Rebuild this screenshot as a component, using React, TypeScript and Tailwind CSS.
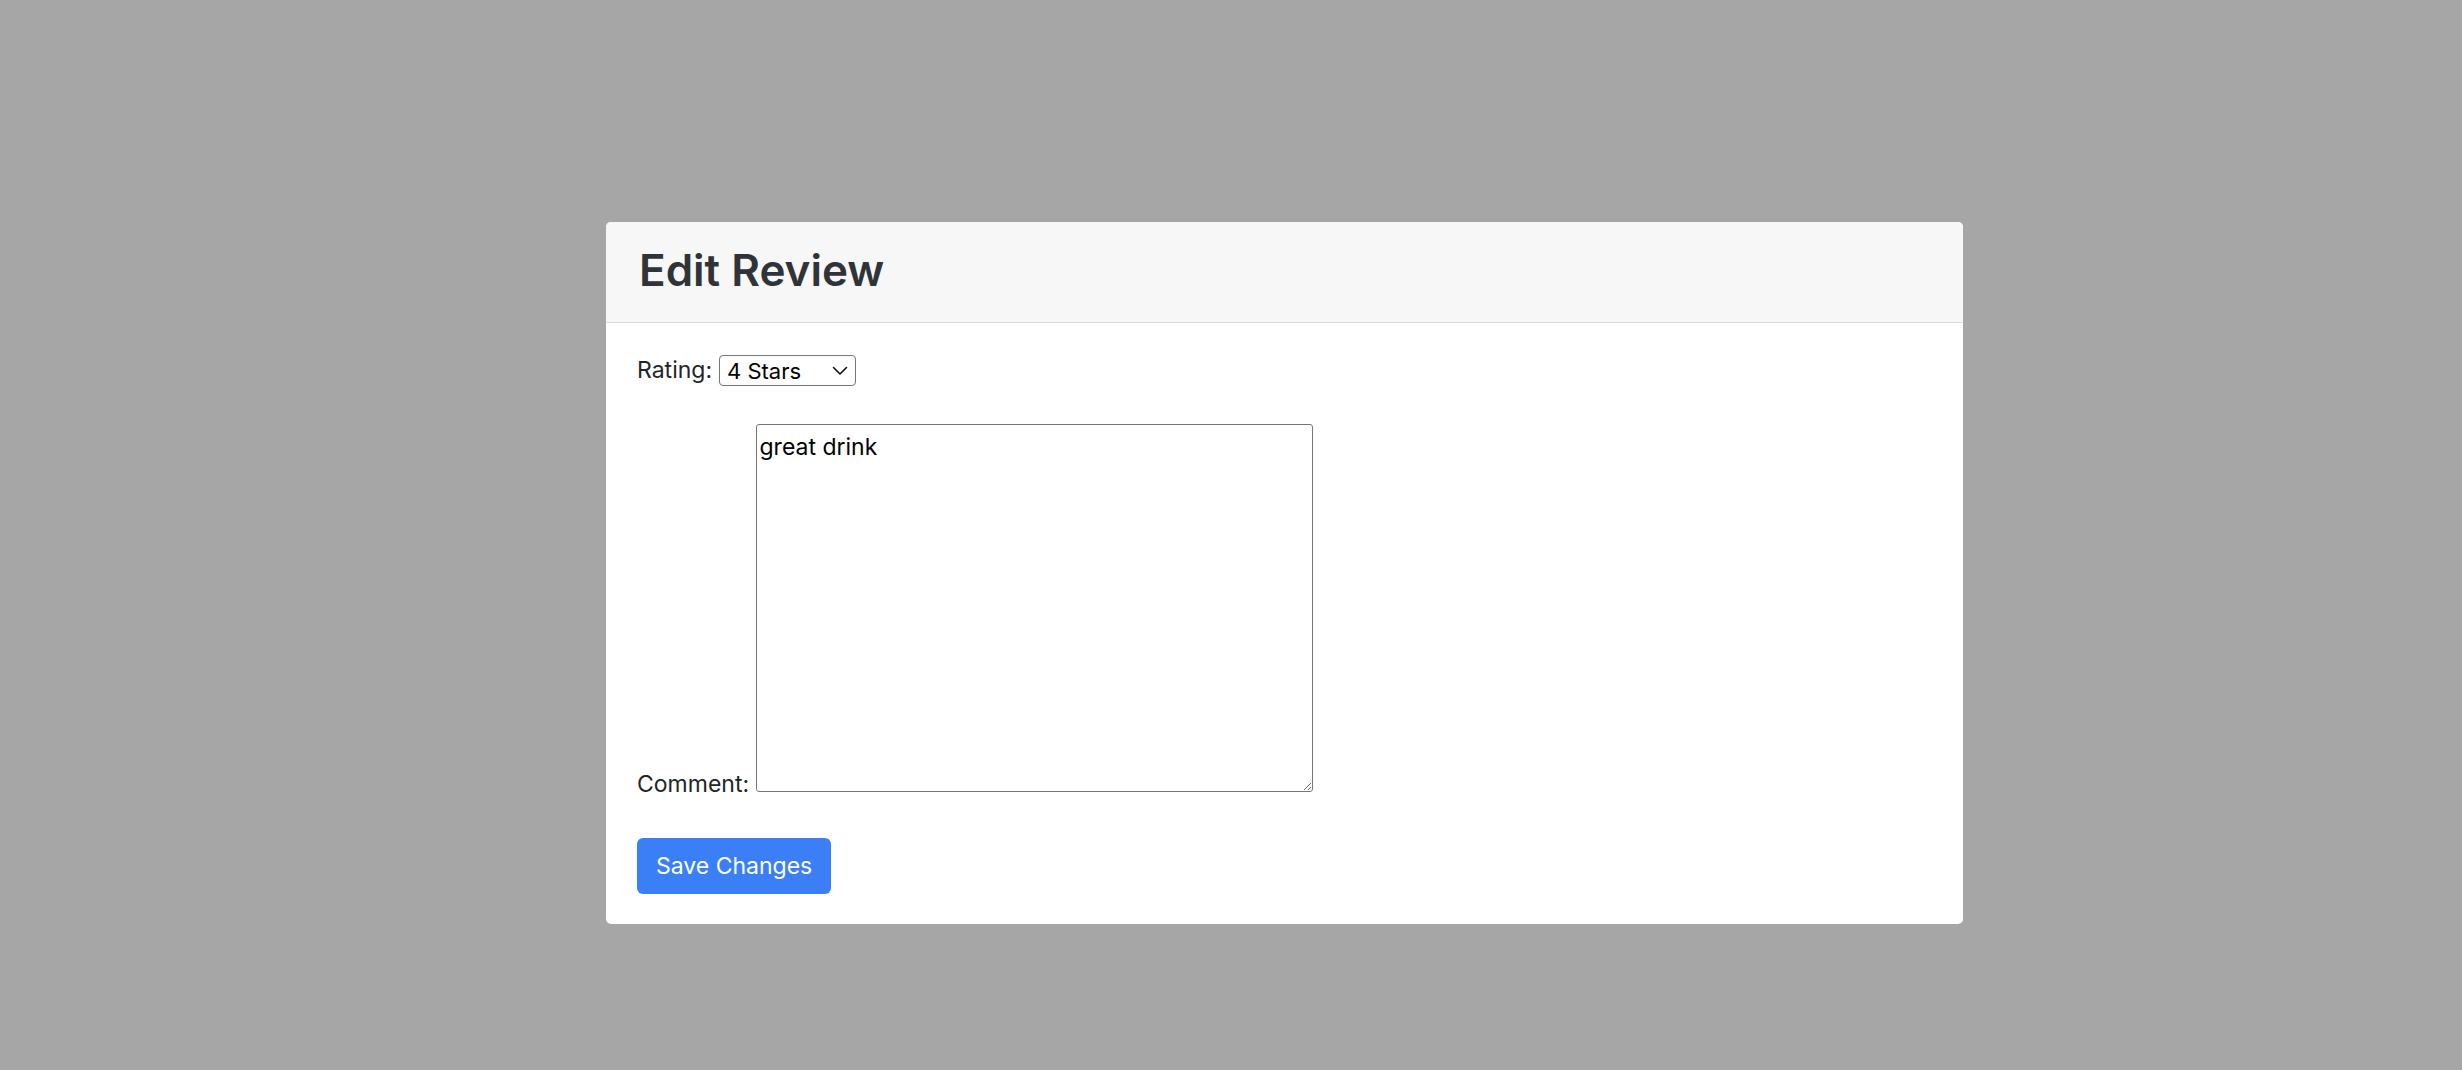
import { useState } from 'react';

export default function App() {
  const [rating, setRating] = useState('4');
  const [comment, setComment] = useState('great drink');

  return (
    <div className="min-h-screen bg-[#a6a6a6] pt-[222px] pl-[606px] font-['Inter',sans-serif] text-[#212529]">
      <div className="w-[1357px] bg-white rounded-[5px] overflow-hidden">
        {/* header */}
        <div className="h-[101px] bg-[#f7f7f7] border-b border-[#dcdcdc] px-[33px] flex items-center">
          <h2 className="text-[44px] leading-none font-semibold text-[#303438] mb-[5px]">Edit Review</h2>
        </div>

        {/* body */}
        <form className="pt-[32px] px-[31px] pb-[30px]" onSubmit={(e) => e.preventDefault()}>
          <div className="flex items-center gap-[7px] h-[31px]">
            <label htmlFor="rating" className="text-[23px]">Rating:</label>
            <div className="relative">
              <select
                id="rating"
                value={rating}
                onChange={(e) => setRating(e.target.value)}
                className="appearance-none w-[137px] h-[31px] border border-[#767676] rounded-[4px] bg-white pl-[7px] text-[22px] text-black leading-none outline-none"
              >
                <option value="1">1 Star</option>
                <option value="2">2 Stars</option>
                <option value="3">3 Stars</option>
                <option value="4">4 Stars</option>
                <option value="5">5 Stars</option>
              </select>
              <svg
                className="pointer-events-none absolute right-[8px] top-1/2 -translate-y-1/2"
                width="16"
                height="10"
                viewBox="0 0 16 10"
                fill="none"
              >
                <polyline points="1.5,1.5 8,8 14.5,1.5" stroke="#111" strokeWidth="1.6" strokeLinecap="round" strokeLinejoin="round" />
              </svg>
            </div>
          </div>

          <div className="mt-[38px] text-[23px] leading-[34px]">
            <label htmlFor="comment">Comment:</label>{' '}
            <textarea
              id="comment"
              value={comment}
              onChange={(e) => setComment(e.target.value)}
              className="w-[557px] h-[368px] border border-[#767676] rounded-[3px] bg-white px-[3px] pt-[5px] pb-[2px] text-[23px] leading-[34px] text-black outline-none align-baseline"
            />
          </div>

          <button
            type="submit"
            className="mt-[37px] h-[56px] px-[19px] rounded-[6px] bg-[#3a7ff6] text-white text-[23px] leading-none"
          >
            Save Changes
          </button>
        </form>
      </div>
    </div>
  );
}
